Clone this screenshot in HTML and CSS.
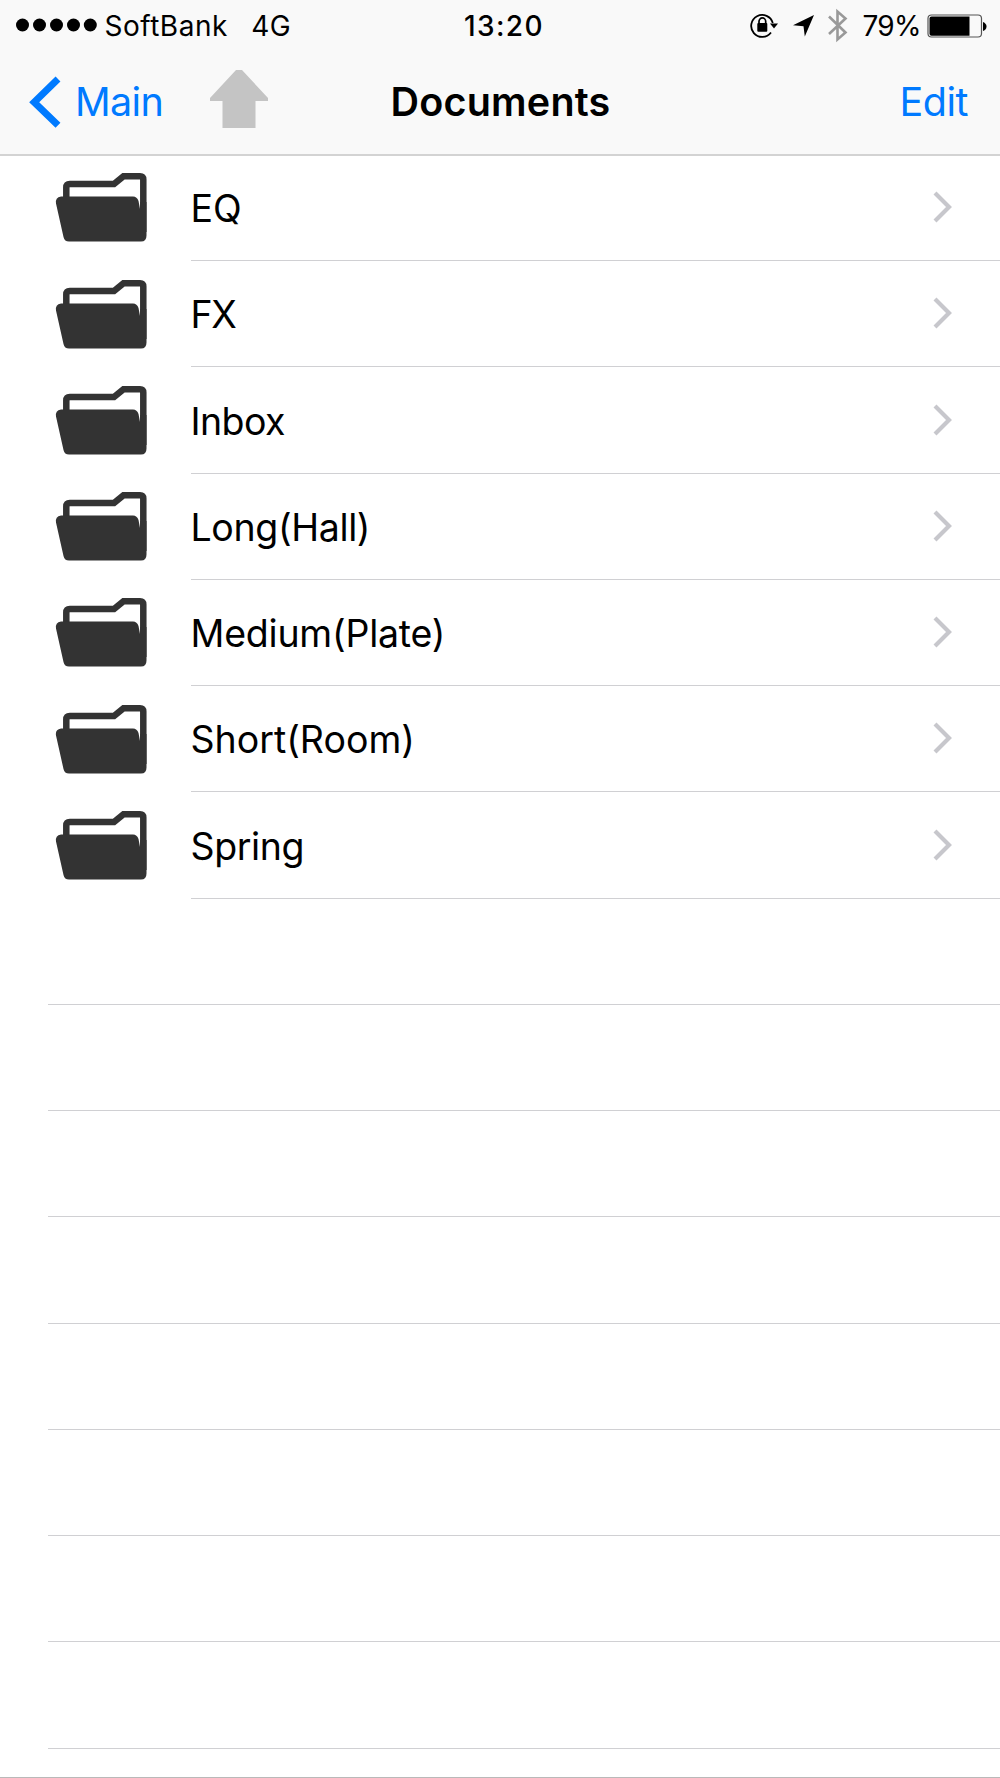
FILE: index.html
```html
<!DOCTYPE html>
<html lang="en">
<head>
<meta charset="utf-8">
<title>Documents</title>
<link rel="stylesheet" href="styles.css">
</head>
<body>
<svg class="defs" width="0" height="0">
  <symbol id="folder" viewBox="0 0 92 71">
    <path d="M11.300 28V15.500Q11.300 12 14.800 12H59L68.500 4.200H85Q88.300 4.200 88.300 7.500V60" fill="none" stroke="#333" stroke-width="6.500"/>
    <path d="M6 24.500H78Q82 24.500 83.500 29L85 37V30H91.500V63.500Q91.500 69.500 86 69.500H14Q9.500 69.500 8.500 65L1 31.500Q0 25.500 6 24.500Z" fill="#333"/>
  </symbol>
  <symbol id="chevron" viewBox="0 0 20 32">
    <path d="M2 2L16 16L2 30" fill="none" stroke="#c7c7cc" stroke-width="4.200"/>
  </symbol>
</svg>
<div class="screen">
  <header>
    <div class="status">
      <div class="side">
        <svg class="signal" width="82" height="14"><circle cx="6.500" cy="7" r="6.500"/><circle cx="23.500" cy="7" r="6.500"/><circle cx="40.500" cy="7" r="6.500"/><circle cx="57.500" cy="7" r="6.500"/><circle cx="74.300" cy="7" r="6.500"/></svg>
        <span class="carrier">SoftBank</span>
        <span class="network">4G</span>
      </div>
      <span class="time">13:20</span>
      <div class="side right">
        <svg width="98" height="50" viewBox="750 0 98 50">
          <path d="M772.800 22A11 11 0 1 0 771 31.500" fill="none" stroke="#000" stroke-width="1.800"/>
          <path d="M770 22.500H778L774 27.500Z"/>
          <rect x="757.300" y="22" width="10" height="8.800" rx="1"/>
          <path d="M759 23V20.500A3.300 3.500 0 0 1 765.700 20.500V23" fill="none" stroke="#000" stroke-width="1.700"/>
          <path d="M814 14L793 24.300L803.500 25.300L804.800 35.500Z"/>
          <path d="M829 15.500L845.500 31.500L837.500 38.500V10.500L845.500 17.500L829 33" fill="none" stroke="#999" stroke-width="2.600"/>
        </svg>
        <span class="percent">79%</span>
        <svg class="battery" width="60" height="24" viewBox="927 12.500 60 24">
          <rect x="928" y="13.500" width="53.500" height="22" rx="3.500" fill="none" stroke="#555" stroke-width="1.200"/>
          <path d="M931.500 15H969.500V34.200H931.500Q929.500 34.200 929.500 32.200V17Q929.500 15 931.500 15Z"/>
          <path d="M983 20.500Q986.500 22 986.500 25Q986.500 28 983 29.500Z"/>
        </svg>
      </div>
    </div>
    <nav>
      <div class="side">
        <svg class="back" width="32" height="52"><path d="M29 3L5.200 26.200L29 49.300" fill="none" stroke="#007aff" stroke-width="7"/></svg>
        <a class="main">Main</a>
        <svg class="up" width="58" height="58"><path d="M26 0H32L58 28V31H45.500V58H12.500V31H0V28Z" fill="#c4c4c4"/></svg>
      </div>
      <h1>Documents</h1>
      <div class="side right"><a class="edit">Edit</a></div>
    </nav>
  </header>
  <main>
    <div class="row"><svg class="folder"><use href="#folder"/></svg><div class="cell"><span class="eq">EQ</span><svg class="chevron"><use href="#chevron"/></svg></div></div>
    <div class="row"><svg class="folder"><use href="#folder"/></svg><div class="cell"><span class="fx">FX</span><svg class="chevron"><use href="#chevron"/></svg></div></div>
    <div class="row"><svg class="folder"><use href="#folder"/></svg><div class="cell"><span class="inbox">Inbox</span><svg class="chevron"><use href="#chevron"/></svg></div></div>
    <div class="row"><svg class="folder"><use href="#folder"/></svg><div class="cell"><span class="long">Long(Hall)</span><svg class="chevron"><use href="#chevron"/></svg></div></div>
    <div class="row"><svg class="folder"><use href="#folder"/></svg><div class="cell"><span class="medium">Medium(Plate)</span><svg class="chevron"><use href="#chevron"/></svg></div></div>
    <div class="row"><svg class="folder"><use href="#folder"/></svg><div class="cell"><span class="short">Short(Room)</span><svg class="chevron"><use href="#chevron"/></svg></div></div>
    <div class="row"><svg class="folder"><use href="#folder"/></svg><div class="cell"><span class="spring">Spring</span><svg class="chevron"><use href="#chevron"/></svg></div></div>
    <div class="row empty"></div>
    <div class="row empty"></div>
    <div class="row empty"></div>
    <div class="row empty"></div>
    <div class="row empty"></div>
    <div class="row empty"></div>
    <div class="row empty"></div>
    <div class="row empty"></div>
  </main>
</div>
</body>
</html>
```
FILE: styles.css
```css
* { box-sizing: border-box; }
body { margin: 0; background: #fff; color: #000; font-family: Inter, "Liberation Sans", sans-serif; }
svg { display: block; flex: none; }
.defs { position: absolute; }
.screen { height: 1778px; overflow: hidden; border-bottom: 1px solid #b9b9b9; }
header { height: 156px; background: #f9f9f9; border-bottom: 2px solid #d3d3d3; }
.status, nav { display: grid; grid-template-columns: 1fr auto 1fr; align-items: center; }
.side { display: flex; align-items: center; }
.right { justify-content: flex-end; }

.status { height: 50px; font-size: 28px; line-height: 50px; }
.status span { padding-top: 1px; }
.signal { margin-left: 16px; margin-top: -2px; }
.carrier { margin-left: 6.5px; letter-spacing: 0.51px; }
.network { margin-left: 23.5px; letter-spacing: 0.41px; }
.time { font-weight: 550; letter-spacing: 1.4px; padding-left: 8px; }
.percent { margin-left: 14.5px; width: 64.500px; letter-spacing: -0.72px; }
.battery { margin-right: 13px; }

nav { height: 104px; font-size: 39.5px; line-height: 104px; }
.back { margin-left: 29px; }
.main, .edit { color: #007aff; }
.main { margin-left: 14px; letter-spacing: -0.64px; }
.up { margin-left: 47px; margin-top: -6px; }
h1 { margin: 0; font-size: inherit; font-weight: 600; letter-spacing: 0.19px; padding-left: 1px; }
.edit { letter-spacing: -0.5px; margin-right: 32px; }

main { margin-top: -1.3px; font-size: 37.5px; }
.row { display: flex; height: 106.28px; align-items: center; }
.folder { width: 92px; height: 71px; margin-left: 55px; margin-right: 43.5px; }
.cell { flex: 1; height: 100%; display: flex; align-items: center; justify-content: space-between; border-bottom: 1px solid #d0d0d3; }
.cell span { padding-top: 2.4px; }
.chevron { width: 20px; height: 32px; margin-right: 47.5px; margin-top: -0.7px; }
.empty { margin-left: 48px; border-bottom: 1px solid #d0d0d3; }
.fx { letter-spacing: -1.3px; }
.inbox { letter-spacing: -0.6px; }
.long { letter-spacing: -0.36px; }
.medium { letter-spacing: -0.22px; }
.spring { letter-spacing: -0.39px; }
```
